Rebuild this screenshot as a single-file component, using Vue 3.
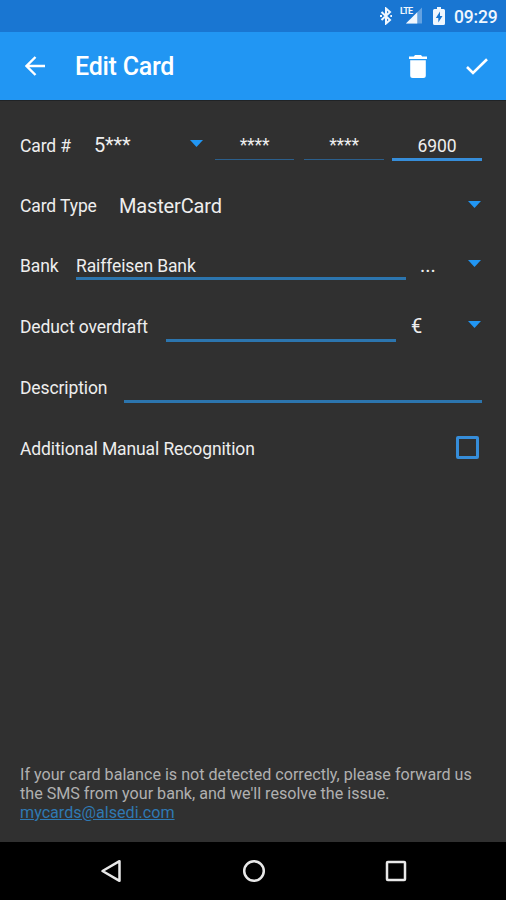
<script setup>
const masked = ['****', '****']
</script>

<template>
  <div class="screen">
    <div class="status">
      <svg class="bt" viewBox="0 0 12 18"><path d="M1.500 5 10 13 6 16.500V1.500L10 5 1.500 13" fill="none" stroke="currentColor" stroke-width="2" /><path d="M0 8h2v2H0zM10.300 8h1.700v2h-1.700z" fill="currentColor" /></svg>
      <div class="signal">
        <span class="lte">LTE</span>
        <svg viewBox="0 0 18 18"><path d="M18 0V17H1z" fill="currentColor" opacity=".35" /><path d="M13 5V17H1z" fill="currentColor" /></svg>
      </div>
      <svg class="battery" viewBox="0 0 12 18"><path fill="currentColor" fill-rule="evenodd" d="M4 0h4v2h2.500Q12 2 12 3.500V16.500Q12 18 10.500 18h-9Q0 18 0 16.500v-13Q0 2 1.500 2H4zM7 4.500 2.800 11H5.300v4.500L9.500 9H7z" /></svg>
      <span class="time">09:29</span>
    </div>

    <header class="bar">
      <svg class="back" viewBox="0 0 20 20"><path d="M20 10H2M10.500 1 1.500 10l9 9" fill="none" stroke="currentColor" stroke-width="2.400" /></svg>
      <h1>Edit Card</h1>
      <svg class="trash" viewBox="0 0 18 23"><path fill="currentColor" d="M0 1.500h4.800L6 0h6l1.200 1.500H18V4H0zM1.200 5.200h15.600V20.500Q16.800 23 14.300 23H3.700Q1.200 23 1.200 20.500z" /></svg>
      <svg class="check" viewBox="0 0 22 17"><path d="M1 9l6 6L21 1.200" fill="none" stroke="currentColor" stroke-width="2.600" /></svg>
    </header>

    <main>
      <div class="row number">
        <label>Card #</label>
        <span class="value">5***</span>
        <i class="arrow"></i>
        <div v-for="(m, i) in masked" :key="i" class="field stars">{{ m }}</div>
        <div class="field active">6900</div>
      </div>
      <div class="row type">
        <label>Card Type</label>
        <span class="value">MasterCard</span>
        <i class="arrow"></i>
      </div>
      <div class="row bank">
        <label>Bank</label>
        <div class="field">Raiffeisen Bank</div>
        <span class="dots">...</span>
        <i class="arrow"></i>
      </div>
      <div class="row deduct">
        <label>Deduct overdraft</label>
        <div class="field"></div>
        <span class="euro">€</span>
        <i class="arrow"></i>
      </div>
      <div class="row description">
        <label>Description</label>
        <div class="field"></div>
      </div>
      <div class="row manual">
        <label>Additional Manual Recognition</label>
        <span class="box"></span>
      </div>
      <p class="note">If your card balance is not detected correctly, please forward us<br>the SMS from your bank, and we'll resolve the issue.<br><a>mycards@alsedi.com</a></p>
    </main>

    <nav>
      <svg viewBox="0 0 24 24"><path d="M20.500 2.200v19.600L3.500 12z" fill="none" stroke="currentColor" stroke-width="2.500" stroke-linejoin="round" /></svg>
      <svg viewBox="0 0 24 24"><circle cx="12" cy="12" r="9.800" fill="none" stroke="currentColor" stroke-width="2.500" /></svg>
      <svg viewBox="0 0 24 24"><rect x="3" y="3" width="18" height="18" rx=".8" fill="none" stroke="currentColor" stroke-width="2.500" /></svg>
    </nav>
  </div>
</template>

<style>
body { margin: 0; background: #000; }
</style>

<style scoped>
.screen {
  width: 506px;
  height: 900px;
  display: flex;
  flex-direction: column;
  background: #303030;
  color: #eee;
  font-family: Roboto, "Liberation Sans", sans-serif;
  overflow: hidden;
}
svg { display: block; flex: none; }
.status {
  height: 32px;
  box-sizing: border-box;
  padding: 0 9px 0 0;
  background: #1976d2;
  display: flex;
  justify-content: flex-end;
  align-items: center;
  color: #f0f7fe;
}
.bt { width: 12px; height: 18px; margin-right: 8px; }
.signal { display: flex; height: 18px; width: 22px; margin-right: 11px; }
.lte { width: 13px; flex: none; font-size: 9px; line-height: 9px; font-weight: 700; letter-spacing: -.7px; }
.signal svg { width: 17px; height: 18px; margin-left: -8px; }
.battery { width: 12px; height: 18px; margin-right: 9px; }
.time { width: 43px; font-size: 17.500px; letter-spacing: -.2px; font-weight: 500; line-height: 32px; padding-top: 1px; white-space: nowrap; }
.bar {
  height: 68px;
  flex: none;
  background: #2196f3;
  border-bottom: 1px solid #202326;
  display: flex;
  align-items: center;
  color: #fff;
  padding: 0 18px 0 25px;
}
.back { width: 20px; height: 20px; }
h1 { margin: 0 0 0 30px; flex: 1; font-size: 25px; letter-spacing: -.25px; font-weight: 500; line-height: 32px; padding-top: 2px; }
.trash { width: 18px; height: 23px; margin-right: 39px; }
.check { width: 22px; height: 17px; }
main {
  flex: 1;
  display: flex;
  flex-direction: column;
  padding: 14px 24px 0 20px;
}
.row { height: 61px; display: grid; flex: none; }
.number, .type { height: 60px; }
label { font-size: 17.500px; letter-spacing: -.11px; line-height: 61px; white-space: nowrap; }
.value { font-size: 20px; letter-spacing: -.15px; line-height: 61px; white-space: nowrap; }
.type .value { line-height: 63px; }
.arrow {
  width: 13px;
  height: 7px;
  margin-top: 25px;
  margin-left: -1px;
  background: #2196f3;
  clip-path: polygon(0 0, 100% 0, 50% 100%);
}
.field {
  box-sizing: border-box;
  height: 46px;
  border-bottom: 3px solid #2c75ae;
  font-size: 17.500px;
  letter-spacing: -.11px;
  line-height: 62px;
  white-space: nowrap;
}
.number { grid-template-columns: 74px 97px 24px 79px 80px 90px; }
.number .stars { height: 45px; border-bottom: 1px solid #2b5f8c; text-align: center; line-height: 61px; }
.number .stars + .stars { margin-left: 10px; margin-right: -10px; }
.number .active { margin-left: 18px; width: 90px; border-color: #368dd9; text-align: center; }
.type { grid-template-columns: 99px 1fr 13px; }
.type .arrow { margin-top: 26px; }
.bank { grid-template-columns: 56px 330px 14px 1fr 13px; }
.bank .field { height: 45px; }
.bank .dots { grid-column: 4; font-size: 20px; line-height: 61px; }
.deduct { grid-template-columns: 146px 230px 15px 1fr 13px; }
.deduct .euro { grid-column: 4; font-size: 20px; line-height: 60px; }
.description { grid-template-columns: 104px 1fr; }
label { line-height: 62px; }
.manual { grid-template-columns: 1fr 26px; }
.box { box-sizing: border-box; width: 23px; height: 23px; margin-top: 18px; border: 3px solid #368dd9; border-radius: 2px; }
.note { margin: auto 0 20px; font-size: 16.120px; line-height: 19px; color: #b0b0b0; white-space: nowrap; }
.note a { color: #2f79b3; text-decoration: underline; }
nav {
  height: 58px;
  flex: none;
  background: #000;
  color: #e8e8e8;
  display: flex;
  justify-content: space-between;
  align-items: center;
  padding: 0 98px 0 99px;
}
nav svg { width: 24px; height: 24px; }
</style>
